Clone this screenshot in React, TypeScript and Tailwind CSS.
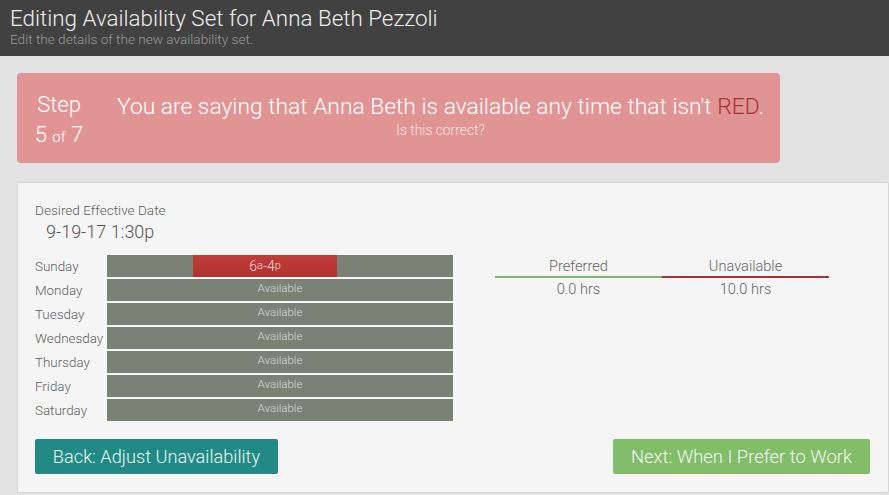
import React from "react";

const days = ["Sunday", "Monday", "Tuesday", "Wednesday", "Thursday", "Friday", "Saturday"];

export default function App() {
  return (
    <div
      className="w-[889px] h-[495px] overflow-hidden bg-[#e3e3e3] text-[#666]"
      style={{ fontFamily: "'Helvetica Neue', Roboto, 'Liberation Sans', Arial, sans-serif" }}
    >
      {/* Header */}
      <div className="h-[56px] bg-[#414141] px-[10px] pt-[4px]">
        <h1 className="text-[22.4px] font-light leading-[28px] text-[#eeeeee]">
          Editing Availability Set for Anna Beth Pezzoli
        </h1>
        <p className="text-[13.6px] font-light leading-[15px] text-[#9a9a9a]">
          Edit the details of the new availability set.
        </p>
      </div>

      {/* Step banner */}
      <div className="ml-[17px] mt-[17px] flex h-[90px] w-[763px] overflow-hidden rounded-[4px] bg-[#e09494]">
        <div className="flex w-[84px] flex-col items-center justify-center gap-[2px] pt-[6px] font-light text-white">
          <div className="text-[22px] leading-[28px]">Step</div>
          <div className="text-[22px] leading-[28px]">
            5 <span className="text-[15px]">of</span> 7
          </div>
        </div>
        <div className="flex flex-1 flex-col items-center pt-[20px] font-light text-white">
          <div className="text-[22.8px] leading-[28px]">
            You are saying that Anna Beth is available any time that isn't{" "}
            <span className="text-[#a83232]">RED</span>.
          </div>
          <div className="mt-[1px] text-[13.8px] leading-[16px] text-[#f7e3e3]">Is this correct?</div>
        </div>
      </div>

      {/* Card */}
      <div className="ml-[17px] mt-[19px] h-[311px] w-[872px] rounded-[2px] border border-[#d6d6d6] bg-[#f5f5f5] pl-[17px] pt-[18px] font-light">
        <div className="text-[13.6px] leading-[18px] text-[#5f5f5f]">Desired Effective Date</div>
        <div className="ml-[11px] mt-[2px] text-[18px] leading-[22px] text-[#555]">9-19-17 1:30p</div>

        <div className="mt-[12px] flex">
          <div className="flex flex-col gap-[2px]" style={{ width: 419 }}>
            {days.map((d) => (
              <div key={d} className="flex h-[22px] items-center">
                <div className="w-[72px] shrink-0 pt-[2px] text-[13.4px] leading-[22px] text-[#5f5f5f]">{d}</div>
                {d === "Sunday" ? (
                  <div className="flex h-[22px] w-[346px] bg-[#7b8174]">
                    <div className="ml-[86px] flex h-full w-[144px] items-center justify-center bg-gradient-to-b from-[#c03e3b] to-[#b0322f] text-[14px] text-[#f2dcdc]">
                      6<span className="text-[11px]">a</span>-4<span className="text-[11px]">p</span>
                    </div>
                  </div>
                ) : (
                  <div className="h-[22px] w-[346px] bg-[#7b8174] pt-[1px] text-center text-[11.5px] leading-[16px] text-[#dcdcdc]">
                    Available
                  </div>
                )}
              </div>
            ))}
          </div>

          <div className="ml-[41px] flex w-[334px] pt-[2px]">
            <div className="flex-1 text-center">
              <div className="border-b-2 border-[#7fba62] pb-[1px] text-[14.6px] leading-[18px] text-[#666]">Preferred</div>
              <div className="mt-[2px] text-[14.6px] leading-[18px] text-[#666]">0.0 hrs</div>
            </div>
            <div className="flex-1 text-center">
              <div className="border-b-2 border-[#a83232] pb-[1px] text-[14.6px] leading-[18px] text-[#666]">Unavailable</div>
              <div className="mt-[2px] text-[14.6px] leading-[18px] text-[#666]">10.0 hrs</div>
            </div>
          </div>
        </div>

        <div className="mt-[18px] flex w-[835px] justify-between">
          <button className="h-[35px] w-[243px] rounded-[2px] bg-[#218a85] text-[18.2px] font-light text-[#eef6f5]">
            Back: Adjust Unavailability
          </button>
          <button className="h-[35px] w-[257px] rounded-[2px] bg-[#82bd69] text-[18.4px] font-light text-[#f3f9f0]">
            Next: When I Prefer to Work
          </button>
        </div>
      </div>
    </div>
  );
}
